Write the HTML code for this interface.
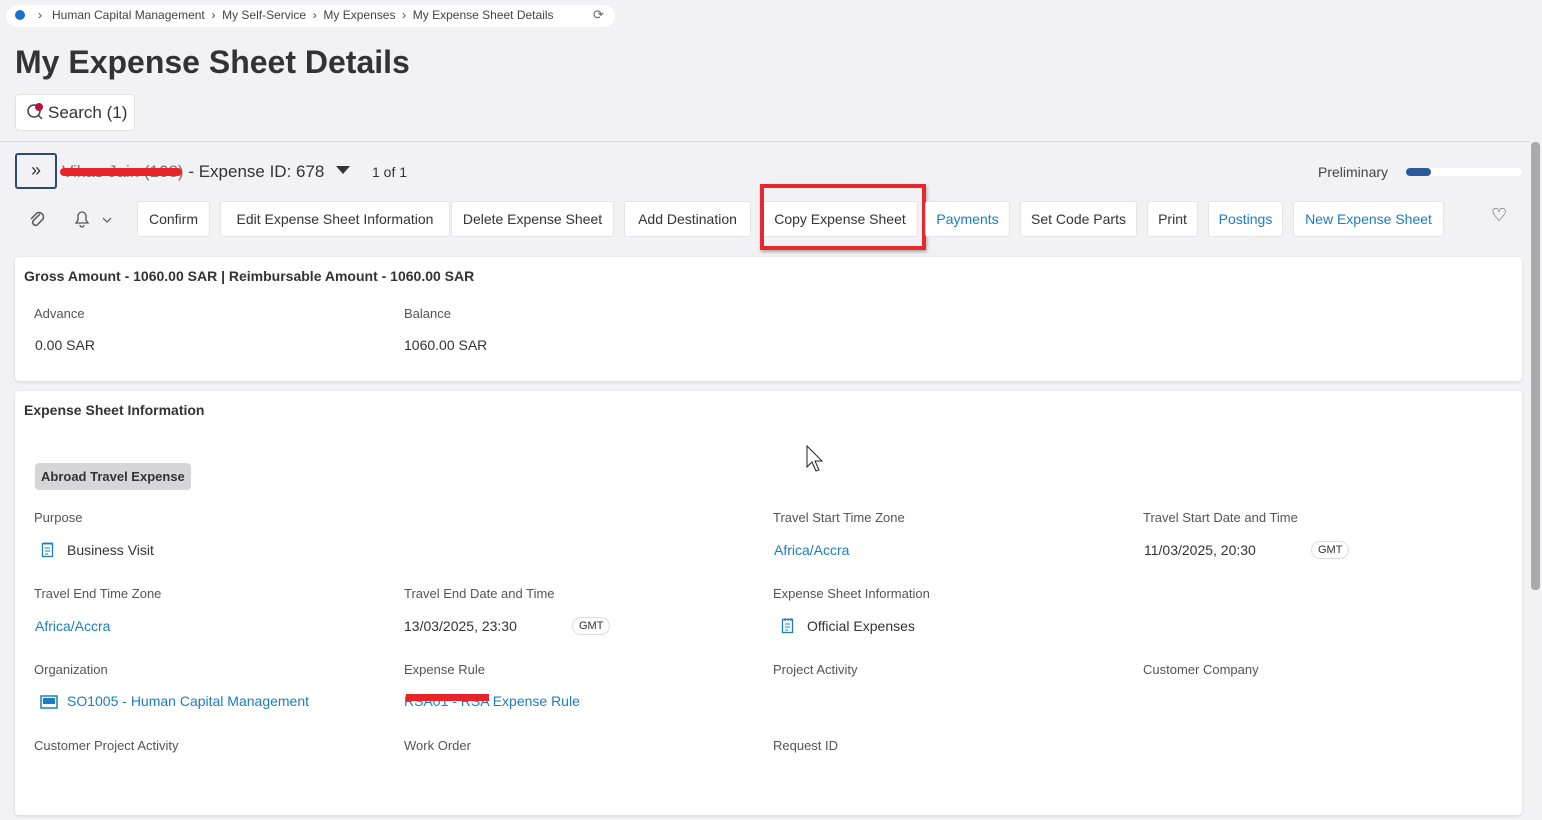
<!DOCTYPE html>
<html><head><meta charset="utf-8"><style>
*{box-sizing:border-box;margin:0;padding:0}
body{width:1542px;height:820px;overflow:hidden;background:#f2f1f4;font-family:"Liberation Sans",sans-serif;color:#333;position:relative}
.a{position:absolute;white-space:nowrap}
.bc{left:6px;top:5px;width:609px;height:22px;background:#fff;border-radius:11px;font-size:12px;color:#444}
.btn{position:absolute;top:201px;height:36px;background:#fff;border:1px solid #e4e4e8;border-radius:3px;font-size:14px;line-height:34px;text-align:center;color:#333}
.card{position:absolute;left:15px;width:1507px;background:#fff;border-radius:4px;box-shadow:0 1px 3px rgba(0,0,0,.12)}
.lbl{position:absolute;font-size:13px;color:#555;white-space:nowrap}
.val{position:absolute;font-size:14px;color:#333;white-space:nowrap}
.btn.lnk,.val.lnk{color:#1a7dc4}
.gmt{position:absolute;font-size:11px;border:1px solid #ddd;border-radius:9px;padding:2px 6px;color:#333}
</style></head><body>
<div class="a bc"><span class="a" style="left:9px;top:5px;width:10px;height:10px;border-radius:50%;background:#1a6fd0"></span>
<span class="a" style="left:32px;top:3px">›&nbsp;&nbsp; Human Capital Management &nbsp;›&nbsp; My Self-Service &nbsp;›&nbsp; My Expenses &nbsp;›&nbsp; My Expense Sheet Details</span>
<span class="a" style="left:587px;top:2px;font-size:13px;color:#666">⟳</span></div>
<div class="a" style="left:15px;top:44px;font-size:32px;font-weight:bold;color:#333">My Expense Sheet Details</div>
<div class="a" style="left:15px;top:94px;width:120px;height:37px;background:#fff;border:1px solid #e2e2e6;border-radius:4px"></div>
<svg class="a" style="left:26px;top:102px" width="20" height="20"><circle cx="8" cy="9" r="6" fill="none" stroke="#444" stroke-width="1.5"/><line x1="12" y1="13" x2="16" y2="17" stroke="#444" stroke-width="1.5"/><circle cx="13" cy="5" r="4" fill="#b5163e"/></svg>
<div class="a" style="left:48px;top:103px;font-size:17px">Search (1)</div>
<div class="a" style="left:0;top:141px;width:1530px;height:1px;background:#ddd"></div>
<div class="a" style="left:15px;top:153px;width:42px;height:36px;border:2px solid #2a4a7a;border-radius:3px;font-size:18px;text-align:center;line-height:30px;color:#333">»</div>
<div class="a" style="left:62px;top:162px;font-size:17px;color:#333"><span style="color:#777">Vikas Jain (108)</span> - Expense ID: 678</div>
<div class="a" style="left:60px;top:168px;width:122px;height:8px;background:#e8232a;border-radius:4px"></div>
<div class="a" style="left:336px;top:166px;width:0;height:0;border-left:7px solid transparent;border-right:7px solid transparent;border-top:8px solid #333"></div>
<div class="a" style="left:372px;top:164px;font-size:14px">1 of 1</div>
<div class="a" style="left:1318px;top:164px;font-size:14px;color:#444">Preliminary</div>
<div class="a" style="left:1406px;top:168px;width:116px;height:8px;background:#fff;border-radius:4px"></div>
<div class="a" style="left:1406px;top:168px;width:25px;height:8px;background:#2d5a9a;border-radius:4px"></div>
<svg class="a" style="left:28px;top:209px" width="18" height="20"><path d="M12 5 L5 12 a3 3 0 0 0 4 4 L15 10 a4.5 4.5 0 0 0 -6 -6 L3 10" fill="none" stroke="#555" stroke-width="1.5"/></svg>
<svg class="a" style="left:72px;top:208px" width="40" height="22"><path d="M4 15 h12 l-2 -3 v-4 a4 4 0 0 0 -8 0 v4 z M8 17 a2 2 0 0 0 4 0" fill="none" stroke="#555" stroke-width="1.3"/><path d="M31 10 l4 4 l4 -4" fill="none" stroke="#555" stroke-width="1.2"/></svg>
<div class="btn" style="left:137px;width:73px">Confirm</div>
<div class="btn" style="left:220px;width:230px">Edit Expense Sheet Information</div>
<div class="btn" style="left:451px;width:163px">Delete Expense Sheet</div>
<div class="btn" style="left:624px;width:127px">Add Destination</div>
<div class="btn" style="left:762px;width:156px">Copy Expense Sheet</div>
<div class="a" style="left:760px;top:184px;width:166px;height:66px;border:4px solid #e8282c;box-shadow:1px 2px 3px rgba(0,0,0,.3)"></div>
<div class="btn lnk" style="left:925px;width:85px">Payments</div>
<div class="btn" style="left:1020px;width:117px">Set Code Parts</div>
<div class="btn" style="left:1147px;width:51px">Print</div>
<div class="btn lnk" style="left:1208px;width:75px">Postings</div>
<div class="btn lnk" style="left:1293px;width:151px">New Expense Sheet</div>
<div class="a" style="left:1491px;top:205px;font-size:18px;color:#444">♡</div>
<div class="card" style="top:257px;height:124px">
<div class="a" style="left:9px;top:11px;font-size:14px;font-weight:bold;color:#333">Gross Amount - 1060.00 SAR | Reimbursable Amount - 1060.00 SAR</div>
<div class="lbl" style="left:19px;top:49px">Advance</div><div class="lbl" style="left:389px;top:49px">Balance</div>
<div class="val" style="left:20px;top:80px">0.00 SAR</div><div class="val" style="left:389px;top:80px">1060.00 SAR</div>
</div>
<div class="card" style="top:391px;height:424px">
<div class="a" style="left:9px;top:11px;font-size:14px;font-weight:bold">Expense Sheet Information</div>
<div class="a" style="left:20px;top:72px;height:27px;padding:0 6px;background:#d6d6d8;border-radius:4px;font-size:13px;font-weight:bold;line-height:27px">Abroad Travel Expense</div>
<div class="lbl" style="left:19px;top:119px">Purpose</div>
<div class="lbl" style="left:758px;top:119px">Travel Start Time Zone</div>
<div class="lbl" style="left:1128px;top:119px">Travel Start Date and Time</div>
<svg class="a" style="left:26px;top:150px" width="14" height="18"><rect x="1.5" y="2.5" width="10" height="13" fill="none" stroke="#1a7dc4" stroke-width="1.3"/><path d="M4 7h5M4 10h5M4 13h3M4 1v3M7 1v3M10 1v3" stroke="#1a7dc4" stroke-width="1"/></svg>
<div class="val" style="left:52px;top:151px">Business Visit</div>
<div class="val lnk" style="left:759px;top:151px">Africa/Accra</div>
<div class="val" style="left:1129px;top:151px">11/03/2025, 20:30</div>
<div class="gmt" style="left:1296px;top:150px">GMT</div>
<div class="lbl" style="left:19px;top:195px">Travel End Time Zone</div>
<div class="lbl" style="left:389px;top:195px">Travel End Date and Time</div>
<div class="lbl" style="left:758px;top:195px">Expense Sheet Information</div>
<div class="val lnk" style="left:20px;top:227px">Africa/Accra</div>
<div class="val" style="left:389px;top:227px">13/03/2025, 23:30</div>
<div class="gmt" style="left:557px;top:226px">GMT</div>
<svg class="a" style="left:766px;top:226px" width="14" height="18"><rect x="1.5" y="2.5" width="10" height="13" fill="none" stroke="#1a7dc4" stroke-width="1.3"/><path d="M4 7h5M4 10h5M4 13h3M4 1v3M7 1v3M10 1v3" stroke="#1a7dc4" stroke-width="1"/></svg>
<div class="val" style="left:792px;top:227px">Official Expenses</div>
<div class="lbl" style="left:19px;top:271px">Organization</div>
<div class="lbl" style="left:389px;top:271px">Expense Rule</div>
<div class="lbl" style="left:758px;top:271px">Project Activity</div>
<div class="lbl" style="left:1128px;top:271px">Customer Company</div>
<svg class="a" style="left:25px;top:304px" width="18" height="14"><rect x="1" y="1" width="16" height="12" fill="none" stroke="#1a7dc4" stroke-width="1.5"/><rect x="3" y="3" width="12" height="6" fill="#1a7dc4"/></svg>
<div class="val lnk" style="left:52px;top:302px">SO1005 - Human Capital Management</div>
<div class="val lnk" style="left:389px;top:302px">RSA01 - RSA Expense Rule</div>
<div class="a" style="left:391px;top:303px;width:83px;height:7px;background:#e8232a"></div>
<div class="lbl" style="left:19px;top:347px">Customer Project Activity</div>
<div class="lbl" style="left:389px;top:347px">Work Order</div>
<div class="lbl" style="left:758px;top:347px">Request ID</div>
</div>
<svg class="a" style="left:806px;top:445px" width="20" height="28"><path d="M1 1 L1 22 L6 17 L10 26 L13 25 L9 16 L16 16 Z" fill="#fff" stroke="#222" stroke-width="1"/></svg>
<div class="a" style="left:1531px;top:142px;width:9px;height:448px;background:#aaa;border-radius:4px"></div>
</body></html>
